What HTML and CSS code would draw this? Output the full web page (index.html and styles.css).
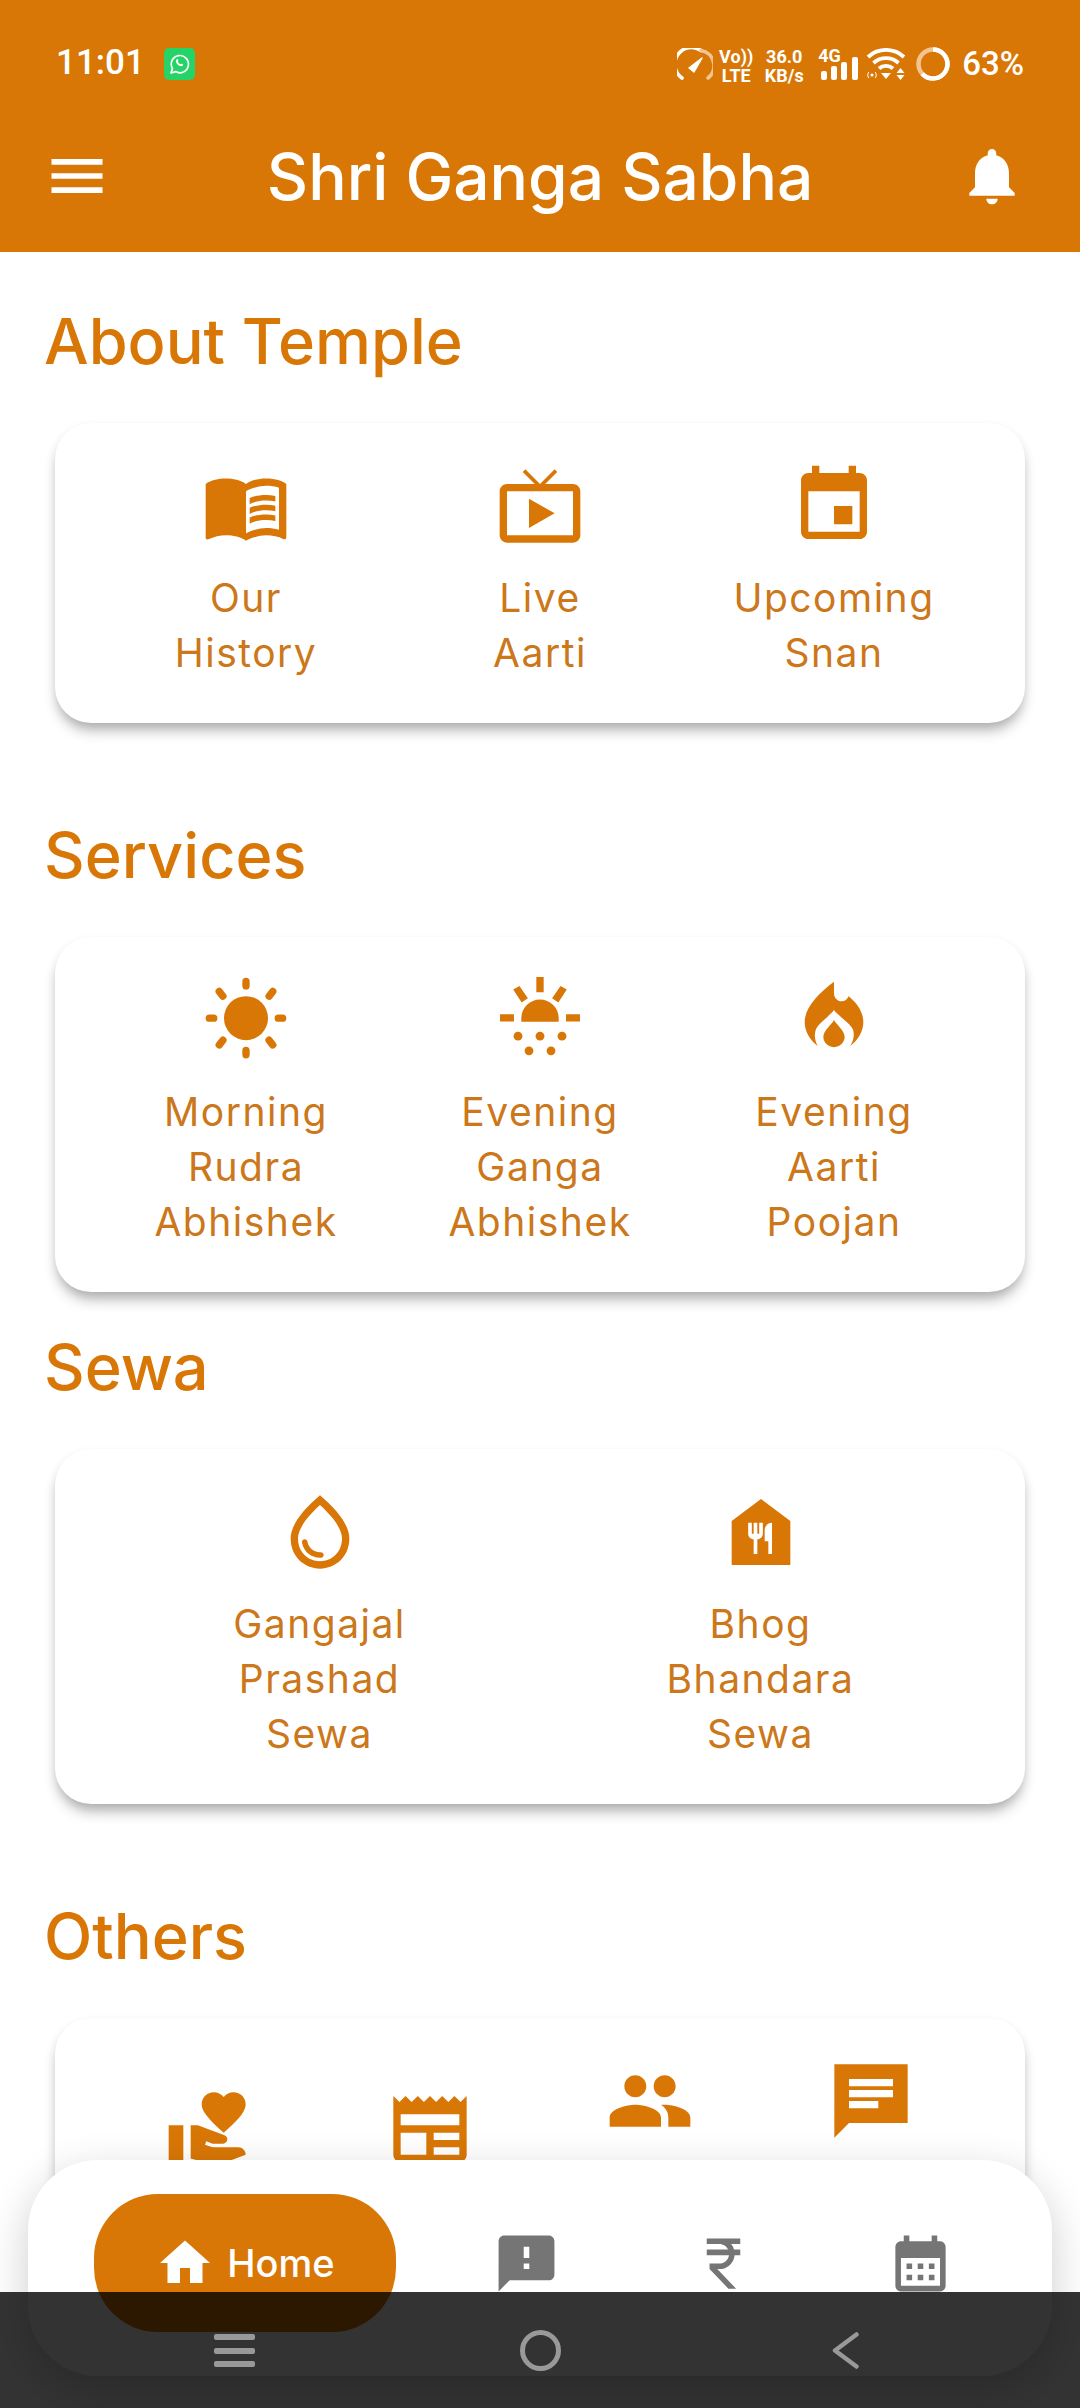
FILE: index.html
```html
<!DOCTYPE html>
<html lang="en">
<head>
    <meta charset="UTF-8">
    <meta name="viewport" content="width=device-width, initial-scale=1.0">
    <title>Shri Ganga Sabha</title>
    <link rel="stylesheet" href="styles.css">
</head>
<body>

    <div class="screen">
        <header class="app-header">
            <div class="status-bar">
                <span class="clock">11:01</span>
                <svg class="whatsapp" viewBox="0 0 31 32">
                    <rect width="31" height="32" rx="5" fill="#25d366"/>
                    <path d="M7 25l1.4-4.6a8.6 8.6 0 1 1 3.2 3.2z" fill="none" stroke="#fff" stroke-width="1.7" stroke-linejoin="round"/>
                    <path d="M12.6 11.4c.8-.8 1.4-.4 1.8.8.2.7-.7 1-.5 1.6.5 1.2 1.300 2 2.500 2.500.6.2.9-.7 1.600-.5 1.200.4 1.600 1 .8 1.800-1.400 1.300-3.700.4-5.200-1.100s-2.400-3.800-1-5.100z" fill="#fff"/>
                </svg>
                <div class="status-icons">
                    <svg class="gauge" viewBox="0 0 36 32" fill="none" stroke-linecap="round">
                        <path d="M5 30A15.500 15.500 0 0 1 24 2.500" stroke="#fff" stroke-width="3.600"/>
                        <path d="M24 2.500A15.500 15.500 0 0 1 31 30" stroke="#f3c48f" stroke-width="3.600"/>
                        <path d="M12 20l13-10-8 14z" fill="#fff" stroke="#fff" stroke-width="1.500" stroke-linejoin="round"/>
                    </svg>
                    <div class="stack volte"><span>Vo))</span><span>LTE</span></div>
                    <div class="stack speed"><span>36.0</span><span>KB/s</span></div>
                    <div class="signal">
                        <span class="net">4G</span>
                        <svg class="bars" viewBox="0 0 37 23" fill="#fff">
                            <rect x="0" y="14" width="6" height="9" rx="2"/>
                            <rect x="10" y="9" width="6" height="14" rx="2"/>
                            <rect x="20" y="5" width="6" height="18" rx="2"/>
                            <rect x="31" y="0" width="6" height="23" rx="2"/>
                        </svg>
                    </div>
                    <svg class="wifi" viewBox="0 0 40 32" fill="none" stroke="#fff" stroke-width="3.800">
                        <path d="M2 9C12-.5 28-.5 38 9"/>
                        <path d="M7.500 15c7-6.500 18-6.500 25 0"/>
                        <path d="M13 20.500c4-3.500 10-3.500 14 0"/>
                        <path d="M15 25h10l-5 6z" fill="#fff" stroke="none"/>
                        <path d="M30.500 25h8l-4-5zM30.500 27h8l-4 5z" fill="#fff" stroke="none"/>
                        <circle cx="6" cy="27" r="1.500" fill="#fff" stroke="none"/>
                        <path d="M2.800 24c-1.400 2-1.400 4 0 6M9.200 24c1.400 2 1.400 4 0 6" stroke-width="1"/>
                    </svg>
                    <svg class="ring" viewBox="0 0 34 34" fill="none" stroke-width="4.500">
                        <circle cx="17" cy="17" r="14.500" stroke="#f3c48f"/>
                        <circle cx="17" cy="17" r="14.500" stroke="#fff" stroke-dasharray="57.400 91.100" transform="rotate(-90 17 17)"/>
                    </svg>
                    <span class="battery">63%</span>
                </div>
            </div>
            <div class="toolbar">
                <svg class="bar-icon" viewBox="0 0 24 24"><path d="M3 18h18v-2H3v2zm0-5h18v-2H3v2zm0-7v2h18V6H3z"/></svg>
                <h1 class="app-title">Shri Ganga Sabha</h1>
                <svg class="bar-icon" viewBox="0 0 24 24"><path d="M12 22c1.100 0 2-.9 2-2h-4c0 1.100.89 2 2 2zm6-6v-5c0-3.070-1.640-5.640-4.500-6.320V4c0-.83-.67-1.500-1.500-1.500s-1.500.67-1.500 1.500v.68C7.630 5.360 6 7.920 6 11v5l-2 2v1h16v-1l-2-2z"/></svg>
            </div>
        </header>

        <main class="content">
            <h2 class="section-title">About Temple</h2>
            <div class="card card-spaced">
                <div class="item">
                    <svg class="icon" viewBox="0 0 24 24"><path d="M21 5c-1.110-.35-2.330-.5-3.500-.5-1.950 0-4.050.4-5.500 1.500-1.450-1.100-3.550-1.500-5.500-1.500S2.450 4.900 1 6v14.650c0 .25.25.5.5.5.1 0 .15-.05.25-.05C3.100 20.450 5.050 20 6.500 20c1.950 0 4.050.4 5.500 1.500 1.350-.85 3.800-1.500 5.500-1.500 1.650 0 3.350.3 4.750 1.050.1.05.15.05.25.05.25 0 .5-.25.5-.5V6c-.6-.45-1.250-.75-2-1zm0 13.500c-1.100-.35-2.300-.5-3.500-.5-1.700 0-4.150.65-5.500 1.500V8c1.350-.85 3.800-1.500 5.500-1.500 1.200 0 2.400.15 3.500.5v11.500z"/><path d="M17.500 10.500c.88 0 1.730.09 2.500.26V9.240c-.79-.15-1.640-.24-2.500-.24-1.700 0-3.240.29-4.500.83v1.660c1.130-.64 2.700-.99 4.500-.99zM13 12.490v1.660c1.130-.64 2.700-.99 4.500-.99.88 0 1.730.09 2.500.26V11.900c-.79-.15-1.640-.24-2.500-.24-1.700 0-3.240.3-4.500.83zM17.500 14.330c-1.700 0-3.240.29-4.500.83v1.660c1.130-.64 2.700-.99 4.500-.99.88 0 1.730.09 2.500.26v-1.520c-.79-.16-1.640-.24-2.500-.24z"/></svg>
                    <div class="label">Our<br>History</div>
                </div>
                <div class="item">
                    <svg class="icon" viewBox="0 0 24 24"><path d="M21 6h-7.590l3.290-3.290L16 2l-4 4-4-4-.71.71L10.590 6H3c-1.100 0-2 .89-2 2v12c0 1.100.9 2 2 2h18c1.100 0 2-.9 2-2V8c0-1.110-.9-2-2-2zm0 14H3V8h18v12zM9 10v8l7-4z"/></svg>
                    <div class="label">Live<br>Aarti</div>
                </div>
                <div class="item">
                    <svg class="icon" viewBox="0 0 24 24"><path d="M17 12h-5v5h5v-5zM16 1v2H8V1H6v2H5c-1.110 0-1.990.9-1.990 2L3 19c0 1.100.89 2 2 2h14c1.100 0 2-.9 2-2V5c0-1.100-.9-2-2-2h-1V1h-2zm3 18H5V8h14v11z"/></svg>
                    <div class="label">Upcoming<br>Snan</div>
                </div>
            </div>

            <h2 class="section-title">Services</h2>
            <div class="card card-tight">
                <div class="item">
                    <svg class="icon" viewBox="0 0 24 24">
                        <circle cx="12" cy="11.500" r="6"/>
                        <path class="ray" d="M2 11.500h1.200M20.800 11.500H22M12 1.500v1.200M12 20.300v1.200M4.700 4.200l1 1.300M19.300 4.200l-1 1.300M4.700 18.800l1-1.300M19.300 18.800l-1-1.300"/>
                    </svg>
                    <div class="label">Morning<br>Rudra<br>Abhishek</div>
                </div>
                <div class="item">
                    <svg class="icon" viewBox="0 0 24 24">
                        <path d="M6.900 12.500v-1a5.100 5.100 0 0 1 10.200 0v1zM11 .3h2v4.100h-2zM1.100 10.400h3.800v2H1.100zM19.100 10.400h3.800v2h-3.800z"/>
                        <path d="M4.700 3.700l1.700-1 2.300 3.400-1.700 1.100zM19.300 3.700l-1.700-1-2.300 3.400 1.700 1.100z"/>
                        <circle cx="6" cy="16.400" r="1.200"/><circle cx="12" cy="16.400" r="1.200"/><circle cx="18" cy="16.400" r="1.200"/>
                        <circle cx="9" cy="20.400" r="1.200"/><circle cx="15" cy="20.400" r="1.200"/>
                    </svg>
                    <div class="label">Evening<br>Ganga<br>Abhishek</div>
                </div>
                <div class="item">
                    <svg class="icon" viewBox="0 0 24 24">
                        <path d="M12 1.600V4.700C12 6 13 6.900 14 6.900C15 6.900 15.600 6.300 16 5.500C18.500 7.500 20 10 20 12.600C20 15 18.500 17.600 16.400 19.100C17.400 17.600 17.600 16 17.200 14.700C16.600 13 13.200 11 12 9.300C10.800 11 7.600 13 7 14.700C6.600 16 6.700 17.600 7.600 19.100C5.500 17.600 4 15 4 12.600C4 8.500 8 4.600 12 1.600Z"/>
                        <path d="M12 12C11.300 13.400 9.100 14.800 9.100 16.600C9.100 18.200 10.400 19.400 12 19.400C13.600 19.400 14.900 18.200 14.900 16.600C14.900 14.800 12.700 13.400 12 12Z"/>
                    </svg>
                    <div class="label">Evening<br>Aarti<br>Poojan</div>
                </div>
            </div>

            <h2 class="section-title">Sewa</h2>
            <div class="card card-spaced">
                <div class="item">
                    <svg class="icon" viewBox="0 0 24 24"><path d="M12 2c-5.330 4.550-8 8.480-8 11.800 0 4.980 3.800 8.200 8 8.200s8-3.220 8-8.200c0-3.320-2.670-7.250-8-11.800zm0 18c-3.350 0-6-2.570-6-6.200 0-2.340 1.950-5.440 6-9.140 4.050 3.700 6 6.790 6 9.140 0 3.630-2.650 6.200-6 6.200zm-4.170-6c.37 0 .67.26.74.62.41 2.220 2.280 2.980 3.640 2.870.43-.02.79.32.79.75 0 .4-.32.73-.72.75-2.130.13-4.620-1.090-5.190-4.120-.08-.45.28-.87.74-.87z"/></svg>
                    <div class="label">Gangajal<br>Prashad<br>Sewa</div>
                </div>
                <div class="item">
                    <svg class="icon" viewBox="0 0 24 24"><path d="M12 3L4 9v12h16V9l-8-6zm.5 9.500c0 .83-.67 1.500-1.500 1.500v4h-1v-4c-.83 0-1.500-.67-1.500-1.500v-3h1v3H10v-3h1v3h.5v-3h1v3zM15 18h-1v-3.500h-1v-3c0-1.100.9-2 2-2V18z"/></svg>
                    <div class="label">Bhog<br>Bhandara<br>Sewa</div>
                </div>
            </div>

            <h2 class="section-title">Others</h2>
            <div class="card">
                <div class="item item-low">
                    <svg class="icon" viewBox="0 0 24 24"><path d="M1 11h4v11H1zm15-7.750C16.650 2.490 17.660 2 18.700 2 20.550 2 22 3.450 22 5.300c0 2.270-2.910 4.900-6 7.700-3.090-2.810-6-5.440-6-7.700C10 3.450 11.450 2 13.300 2c1.040 0 2.050.49 2.700 1.250zM20 17h-7l-2.090-.73.33-.94L13 16h2.820c.65 0 1.180-.53 1.180-1.180 0-.49-.31-.93-.77-1.110L8.970 11H7v9.020L14 22l8.010-3c-.01-1.100-.9-2-2.010-2z"/></svg>
                </div>
                <div class="item item-low">
                    <svg class="icon" viewBox="0 0 24 24"><path d="M22 3l-1.670 1.670L18.670 3 17 4.670 15.330 3l-1.670 1.670L12 3l-1.670 1.670L8.670 3 7 4.670 5.330 3 3.670 4.670 2 3v16c0 1.100.9 2 2 2h16c1.100 0 2-.9 2-2V3zM11 19H4v-6h7v6zm9 0h-7v-2h7v2zm0-4h-7v-2h7v2zm0-4H4V8h16v3z"/></svg>
                </div>
                <div class="item">
                    <svg class="icon" viewBox="0 0 24 24"><path d="M16 11c1.660 0 2.990-1.340 2.990-3S17.660 5 16 5c-1.660 0-3 1.340-3 3s1.340 3 3 3zm-8 0c1.660 0 2.990-1.340 2.990-3S9.660 5 8 5C6.340 5 5 6.340 5 8s1.340 3 3 3zm0 2c-2.330 0-7 1.170-7 3.500V19h14v-2.500c0-2.330-4.670-3.500-7-3.500zm8 0c-.29 0-.62.02-.97.05 1.160.84 1.970 1.970 1.970 3.450V19h6v-2.500c0-2.330-4.670-3.500-7-3.500z"/></svg>
                </div>
                <div class="item">
                    <svg class="icon" viewBox="0 0 24 24"><path d="M22 2H2.010L2 22l4-4h16V2zM6 9h12v2H6V9zm8 5H6v-2h8v2zm4-6H6V6h12v2z"/></svg>
                </div>
            </div>
        </main>

        <nav class="bottom-nav">
            <div class="nav-home">
                <svg class="nav-home-icon" viewBox="0 0 24 24"><path d="M10 20v-6h4v6h5v-8h3L12 3 2 12h3v8z"/></svg>
                <span>Home</span>
            </div>
            <div class="nav-item">
                <svg class="nav-icon" viewBox="0 0 24 24"><path d="M20 2H4c-1.100 0-1.990.9-1.990 2L2 22l4-4h14c1.100 0 2-.9 2-2V4c0-1.100-.9-2-2-2zm-7 12h-2v-2h2v2zm0-4h-2V6h2v4z"/></svg>
            </div>
            <div class="nav-item">
                <svg class="nav-icon" viewBox="0 0 24 24"><path d="M13.660 7C13.100 5.820 11.900 5 10.500 5H6V3h12v2h-3.260c.48.58.84 1.260 1.050 2H18v2h-2.020c-.25 2.800-2.610 5-5.480 5h-.73l6.730 7h-2.770L7 14v-2h3.500c1.760 0 3.220-1.300 3.460-3H6V7h7.660z"/></svg>
            </div>
            <div class="nav-item">
                <svg class="nav-icon" viewBox="0 0 24 24"><path d="M19 4h-1V2h-2v2H8V2H6v2H5c-1.100 0-2 .9-2 2v14c0 1.100.9 2 2 2h14c1.100 0 2-.9 2-2V6c0-1.100-.9-2-2-2zm0 16H5V10h14v10z"/><path d="M9 14H7v-2h2v2zm4 0h-2v-2h2v2zm4 0h-2v-2h2v2zm-8 4H7v-2h2v2zm4 0h-2v-2h2v2zm4 0h-2v-2h2v2z"/></svg>
            </div>
        </nav>

        <div class="system-nav">
            <svg class="sys-menu" viewBox="0 0 41 33" fill="#999"><rect width="41" height="6" rx="2"/><rect y="14" width="41" height="6" rx="2"/><rect y="27" width="41" height="6" rx="2"/></svg>
            <svg class="sys-home" viewBox="0 0 41 41" fill="none" stroke="#999" stroke-width="5"><circle cx="20.500" cy="20.500" r="18"/></svg>
            <svg class="sys-back" viewBox="0 0 27 37" fill="none" stroke="#999" stroke-width="4.500" stroke-linecap="round" stroke-linejoin="round"><path d="M24.500 2.500L3 18.500l21.500 16"/></svg>
        </div>
    </div>

</body>
</html>
```

FILE: styles.css
```css
body {
    margin: 0;
    font-family: Inter, "Liberation Sans", sans-serif;
    background-color: #fff;
}
.screen {
    position: relative;
    width: 1080px;
    height: 2408px;
    overflow: hidden;
}
.app-header {
    height: 252px;
    background-color: #d97706;
    color: #fff;
}
.status-bar {
    height: 100px;
    box-sizing: border-box;
    padding: 48px 56px 0 56px;
    display: flex;
    font-family: Roboto, sans-serif;
}
.clock {
    font-size: 35px;
    font-weight: 500;
    line-height: 30px;
}
.whatsapp {
    width: 31px;
    height: 32px;
    margin-left: 19px;
}
.status-icons {
    margin-left: auto;
    display: flex;
    align-items: flex-start;
}
.gauge {
    width: 36px;
    height: 32px;
}
.stack {
    display: flex;
    flex-direction: column;
    align-items: center;
    font-size: 18px;
    font-weight: 700;
    line-height: 17px;
    gap: 2px;
}
.volte {
    margin-left: 9px;
    width: 28px;
}
.speed {
    margin-left: 15px;
    width: 38px;
}
.signal {
    position: relative;
    width: 40px;
    height: 32px;
    margin-left: 15px;
}
.net {
    position: absolute;
    left: 0;
    top: 0;
    font-size: 18px;
    font-weight: 700;
    line-height: 16px;
}
.bars {
    position: absolute;
    left: 3px;
    top: 9px;
    width: 37px;
    height: 23px;
}
.wifi {
    width: 40px;
    height: 32px;
    margin-left: 8px;
}
.ring {
    width: 34px;
    height: 34px;
    margin-left: 10px;
    margin-top: -1px;
}
.battery {
    margin-left: 12px;
    font-size: 33px;
    font-weight: 500;
    line-height: 32px;
}
.toolbar {
    height: 152px;
    box-sizing: border-box;
    padding: 0 54px 0 43px;
    display: flex;
    align-items: center;
}
.bar-icon {
    width: 68px;
    height: 68px;
    fill: #fff;
}
.app-title {
    flex: 1;
    margin: 0;
    padding-left: 11px;
    text-align: center;
    font-size: 64px;
    font-weight: 500;
}
.content {
    padding-top: 51px;
}
.section-title {
    margin: 0 0 44px 44px;
    height: 76px;
    font-size: 63px;
    font-weight: 500;
    line-height: 76px;
    color: #d97706;
}
.card {
    margin: 0 55px;
    padding: 39px 44px 43px;
    display: flex;
    align-items: flex-start;
    background-color: #fff;
    border-radius: 36px;
    box-shadow: 0 10px 14px -3px rgba(0, 0, 0, 0.3), 0 3px 10px rgba(0, 0, 0, 0.06);
}
.card-spaced {
    margin-bottom: 94px;
}
.card-tight {
    margin-bottom: 37px;
}
.item {
    flex: 1;
    text-align: center;
}
.item-low {
    margin-top: 28px;
}
.icon {
    display: block;
    width: 88px;
    height: 88px;
    margin: 0 auto 20px;
    fill: #d97706;
}
.ray {
    fill: none;
    stroke: #d97706;
    stroke-width: 2;
    stroke-linecap: round;
}
.label {
    font-size: 39px;
    line-height: 55px;
    letter-spacing: 1.5px;
    color: #cb771a;
}
.bottom-nav {
    position: absolute;
    left: 28px;
    top: 2160px;
    width: 1024px;
    height: 216px;
    box-sizing: border-box;
    padding: 34px 0 0 66px;
    display: flex;
    align-items: flex-start;
    background-color: #fff;
    border-radius: 70px;
    box-shadow: 0 14px 44px rgba(0, 0, 0, 0.2);
}
.nav-home {
    width: 302px;
    height: 138px;
    margin-right: 32px;
    display: flex;
    align-items: center;
    justify-content: center;
    gap: 12px;
    background-color: #d97706;
    border-radius: 64px;
    font-size: 38px;
    font-weight: 500;
    color: #fff;
}
.nav-home-icon {
    width: 60px;
    height: 60px;
    fill: #fff;
}
.nav-item {
    width: 197px;
    height: 138px;
    display: flex;
    align-items: center;
    justify-content: center;
}
.nav-icon {
    width: 67px;
    height: 67px;
    fill: #757575;
}
.system-nav {
    position: absolute;
    left: 0;
    right: 0;
    bottom: 0;
    height: 116px;
    background-color: rgba(0, 0, 0, 0.8);
}
.system-nav svg {
    position: absolute;
}
.sys-menu {
    left: 214px;
    top: 42px;
    width: 41px;
    height: 33px;
}
.sys-home {
    left: 520px;
    top: 38px;
    width: 41px;
    height: 41px;
}
.sys-back {
    left: 832px;
    top: 40px;
    width: 27px;
    height: 37px;
}
```
